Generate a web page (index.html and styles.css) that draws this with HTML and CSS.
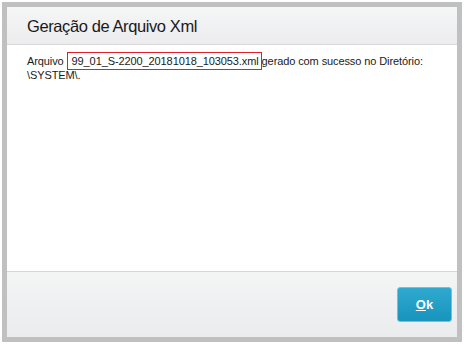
FILE: index.html
```html
<!DOCTYPE html>
<html lang="pt">
<head>
    <meta charset="UTF-8">
    <meta name="viewport" content="width=device-width, initial-scale=1.0">
    <title>Geração de Arquivo Xml</title>
    <link rel="stylesheet" href="styles.css">
</head>
<body>
    <div class="dialog">
        <div class="dialog-header">Geração de Arquivo Xml</div>
        <div class="dialog-body">
            Arquivo <span class="file-name">99_01_S-2200_20181018_103053.xml</span>gerado com sucesso no Diretório:<br>
            \SYSTEM\.
        </div>
        <div class="dialog-footer">
            <button class="btn-ok"><u>O</u>k</button>
        </div>
    </div>
</body>
</html>
```
FILE: styles.css
```css
html, body {
    margin: 0;
    padding: 0;
    background: #ffffff;
}

body {
    font-family: "Liberation Sans", Arial, sans-serif;
    padding: 2px;
}

.dialog {
    width: 450px;
    height: 330px;
    border: 5px solid #c0c0c0;
    display: flex;
    flex-direction: column;
    background: #ffffff;
}

.dialog-header {
    height: 37px;
    border-bottom: 1px solid #d9d9d9;
    background: linear-gradient(#f5f6f6, #ececee);
    color: #1a1a1a;
    font-size: 16.5px;
    letter-spacing: -0.4px;
    line-height: 38px;
    padding-left: 20px;
}

.dialog-body {
    flex: 1;
    padding: 9px 20px 0 20px;
    font-size: 11px;
    letter-spacing: -0.1px;
    line-height: 14px;
    color: #1a1a1a;
}

.file-name {
    border: 1px solid #e0202a;
    padding: 2px 2px 2px 4px;
}

.dialog-footer {
    height: 66px;
    border-top: 1px solid #d6d6d6;
    background: linear-gradient(#f3f4f4, #ebecee);
    display: flex;
    justify-content: flex-end;
    align-items: flex-start;
    padding: 15px 5px 0 0;
    box-sizing: border-box;
}

.btn-ok {
    width: 55px;
    height: 35px;
    border: 1px solid #5cc8e8;
    border-radius: 3px;
    background: linear-gradient(#2fa9cf, #1894bd);
    color: #ffffff;
    font-family: "Liberation Sans", Arial, sans-serif;
    font-size: 13px;
    font-weight: bold;
    padding: 0;
}
```
